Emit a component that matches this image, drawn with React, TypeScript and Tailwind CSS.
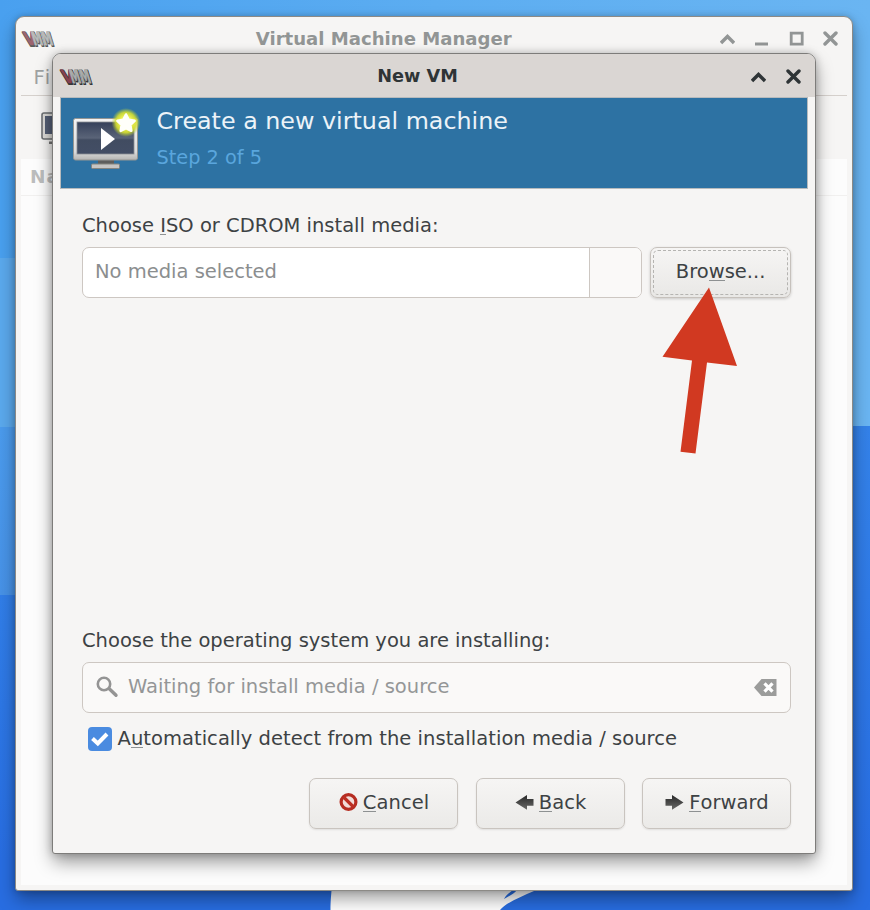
import type { ReactNode } from "react";

function VmmLogo({ faded }: { faded?: boolean }) {
  return (
    <svg width="38" height="24" viewBox="-1 0 38 24" className={faded ? "shrink-0 overflow-visible opacity-80" : "shrink-0 overflow-visible"}>
      <g transform="skewX(17)" fontFamily="DejaVu Sans" fontWeight="bold" fontSize="18.5" strokeLinejoin="round">
        <g fill="#343737" stroke="#343737" strokeWidth="2.2">
          <text x="-1" y="18.800" textLength="11.500" lengthAdjust="spacingAndGlyphs">V</text>
          <text x="7" y="18.800" textLength="20" lengthAdjust="spacingAndGlyphs">MM</text>
        </g>
        <text x="-1.500" y="17.900" textLength="11.500" lengthAdjust="spacingAndGlyphs" fill="#87414f" stroke="#87414f" strokeWidth="0.300">V</text>
        <text x="6.500" y="17.900" textLength="20" lengthAdjust="spacingAndGlyphs" fill="#a9acac" stroke="#a9acac" strokeWidth="0.800">MM</text>
      </g>
    </svg>
  );
}

function MonitorIcon() {
  return (
    <svg width="70" height="64" viewBox="0 0 70 64" className="shrink-0">
      <defs>
        <linearGradient id="frame" x1="0" y1="0" x2="0" y2="1">
          <stop offset="0" stopColor="#f4f4f4" />
          <stop offset="0.8" stopColor="#dcdcdb" />
          <stop offset="1" stopColor="#b5b5b3" />
        </linearGradient>
        <linearGradient id="screen" x1="0" y1="0" x2="0" y2="1">
          <stop offset="0" stopColor="#35405a" />
          <stop offset="0.5" stopColor="#5a6478" />
          <stop offset="0.56" stopColor="#414c61" />
          <stop offset="1" stopColor="#434e65" />
        </linearGradient>
        <radialGradient id="glow">
          <stop offset="0" stopColor="#fffde0" />
          <stop offset="0.4" stopColor="#f0f45a" />
          <stop offset="0.7" stopColor="#d6e02f" stopOpacity="0.9" />
          <stop offset="1" stopColor="#b5d03a" stopOpacity="0" />
        </radialGradient>
      </defs>
      <path d="M25 52h16v5H25z" fill="#5e5e5c" />
      <rect x="18.500" y="56" width="28" height="4.500" rx="1" fill="#c6c5c3" stroke="#85857f" />
      <rect x="0.500" y="10.500" width="64" height="41.500" rx="2" fill="url(#frame)" stroke="#969693" />
      <rect x="4" y="14" width="57" height="32" fill="url(#screen)" stroke="#8b8e94" strokeWidth="0.8" />
      <path d="M28 20v22l14-11z" fill="#fff" />
      <circle cx="53" cy="14.500" r="14.500" fill="url(#glow)" />
      <path d="M53 6.500l2.700 5.400 5.900.9-4.300 4.100 1 5.900-5.300-2.800-5.300 2.800 1-5.900-4.300-4.100 5.900-.9z" fill="#fffffa" stroke="#fffffa" strokeWidth="2.600" strokeLinejoin="round" />
    </svg>
  );
}

function CloseMark({ color }: { color: string }) {
  return (
    <svg width="15" height="15" viewBox="0 0 15 15">
      <path d="M2 2l11 11M13 2L2 13" stroke={color} strokeWidth="3.400" strokeLinecap="round" />
    </svg>
  );
}

function ShadeMark({ color }: { color: string }) {
  return (
    <svg width="15" height="15" viewBox="0 0 15 15">
      <path d="M2.200 10.800L7.500 5.500l5.300 5.300" fill="none" stroke={color} strokeWidth="3.400" strokeLinecap="square" />
    </svg>
  );
}

function Mnemonic({ children }: { children: ReactNode }) {
  return <span className="inline-block border-b border-[#8e9192] leading-[17px]">{children}</span>;
}

function CancelIcon() {
  return (
    <svg width="19" height="19" viewBox="0 0 19 19">
      <circle cx="9.500" cy="9" r="7.400" fill="#f2dcd8" stroke="#b62d22" strokeWidth="3.200" />
      <path d="M4.500 4l10 10" stroke="#bd3024" strokeWidth="3.200" />
    </svg>
  );
}

function ArrowIcon({ right }: { right?: boolean }) {
  return (
    <svg width="19" height="18" viewBox="0 0 19 18" className={right ? "-scale-x-100" : ""}>
      <defs>
        <linearGradient id="arrow" x1="0" y1="0" x2="0" y2="1">
          <stop offset="0" stopColor="#282828" />
          <stop offset="1" stopColor="#6a6a68" />
        </linearGradient>
      </defs>
      <path d="M.5 8.500L12 1v4h6.500v6.700H12v4z" fill="url(#arrow)" />
    </svg>
  );
}

function ActionButton({ icon, children }: { icon: ReactNode; children: ReactNode }) {
  return (
    <button className="flex h-[51px] w-[149px] items-center justify-center gap-[5px] rounded-[7px] border border-[#c9c4bf] bg-linear-to-b from-[#f6f5f4] to-[#ebeae8] pb-[2px] pl-px text-[#3d4244] shadow-[0_1px_2px_#00000018]">
      {icon}
      <span className="tracking-[0.050px]">{children}</span>
    </button>
  );
}

function Backdrop() {
  return (
    <div className="flex h-full flex-col bg-[#286de1]">
      <div className="flex h-[860px]">
        <div className="flex w-1/2 flex-col">
          <div className="h-[258px] bg-linear-to-r from-[#49a0ef] to-[#5cadf1]" />
          <div className="h-[169px] bg-[#5ba9ed]" />
          <div className="h-[168px] bg-linear-to-b from-[#4b9bed] to-[#4792e7]" />
          <div className="grow bg-linear-to-b from-[#317ee8] to-[#286de1]" />
        </div>
        <div className="flex w-1/2 flex-col">
          <div className="h-[426px] bg-linear-to-r from-[#5cadf1] to-[#6ab5f2]" />
          <div className="grow bg-linear-to-b from-[#3482e9] to-[#286de1]" />
        </div>
      </div>
      <svg width="870" height="50" viewBox="0 0 870 50">
        <path d="M330.500 50C330.500 42 331 36 332 25H540L534 31C520 37 506 43 500 50Z" fill="#fff" />
        <path d="M504 39c2-4 5-6 9-9h4c-3 4-8 6-13 9z" fill="#286de1" />
      </svg>
    </div>
  );
}

function ManagerWindow() {
  return (
    <section className="absolute left-[15px] top-4 flex h-[875px] w-[838px] flex-col rounded-t-[9px] rounded-b-[3px] border border-[#8c8a86] bg-[#f6f5f4] px-[5px] pb-[5px] shadow-[0_9px_18px_-1px_#00000060,0_0_6px_#00000030]">
      <header className="flex h-[43px] shrink-0 items-center text-[18.100px] font-bold text-[#929595]">
        <VmmLogo faded />
        <h1 className="grow pr-[11px] text-center">Virtual Machine Manager</h1>
        <div className="flex gap-[19.500px] pr-[9px]">
          <ShadeMark color="#929595" />
          <svg width="15" height="15" viewBox="0 0 15 15"><path d="M1 13h13" stroke="#929595" strokeWidth="3" /></svg>
          <svg width="15" height="15" viewBox="0 0 15 15"><path d="M2.200 2.200h11v11h-11z" fill="none" stroke="#929595" strokeWidth="2.800" /></svg>
          <CloseMark color="#929595" />
        </div>
      </header>
      <nav className="h-[36px] shrink-0 border-b border-[#d5d0cc] pl-[12.500px] pt-[4px] text-[19.500px] leading-[28px] tracking-[1.400px] text-[#a0a3a3]">File</nav>
      <div className="flex h-[63px] shrink-0 pl-[20px] pt-[16px]">
        <svg width="34" height="34" viewBox="0 0 34 34">
          <rect x="1" y="1" width="32" height="26" rx="2" fill="#deddda" stroke="#6d7073" strokeWidth="1.600" />
          <rect x="4" y="4" width="26" height="18" fill="#566077" />
          <path d="M8 29.500h18v2.500H8z" fill="#777" />
        </svg>
      </div>
      <div className="grow bg-[#fcfcfc]">
        <div className="h-[37px] border-b border-[#f1f0ef] pl-[9px] text-[18.500px] font-bold leading-[36px] tracking-[1px] text-[#bcbdbd]">Name</div>
      </div>
    </section>
  );
}

function NewVmDialog() {
  return (
    <section className="absolute left-[52px] top-[53px] flex h-[801px] w-[764px] flex-col rounded-t-[9px] rounded-b-[3px] border border-[#7d7c7a] bg-[#f6f5f4] shadow-[0_9px_18px_-1px_#00000065,0_0_8px_#00000038]">
      <header className="flex h-[43px] shrink-0 items-center rounded-t-[8px] bg-[#dad6d3] pl-[6px] pr-[14.500px] pt-[2px] text-[17.700px] font-bold text-[#2e3436]">
        <VmmLogo />
        <h2 className="grow pr-[13px] text-center">New VM</h2>
        <div className="flex gap-[19.500px]">
          <ShadeMark color="#2e3436" />
          <CloseMark color="#2e3436" />
        </div>
      </header>
      <div className="mx-[7px] flex h-[92px] shrink-0 gap-[13.500px] border border-[#b7bbbd] bg-[#2d72a3] pl-[12px] pt-[10px]">
        <MonitorIcon />
        <div className="flex flex-col">
          <h3 className="-mt-px text-[23.800px] leading-[28px] text-[#ecf3f8]">Create a new virtual machine</h3>
          <p className="mt-[9px] text-[19.300px] leading-[28px] text-[#5aa6dd]">Step 2 of 5</p>
        </div>
      </div>
      <div className="flex grow flex-col pl-[29px] pr-[24px] pb-[24px] pt-[20px] text-[19.500px] text-[#3d4244]">
        <label className="pt-px leading-[31px]">Choose <Mnemonic>I</Mnemonic>SO or CDROM install media:</label>
        <div className="mt-[6px] flex h-[51px] gap-[8px]">
          <div className="flex w-[561px] overflow-hidden rounded-[7px] border border-[#cdc7c2] bg-white">
            <div className="grow pl-[12px] leading-[48px] text-[#8b8e8f]">No media selected</div>
            <div className="w-[52px] border-l border-[#cdc7c2] bg-[#faf9f8]" />
          </div>
          <button className="w-[141px] rounded-[7px] border border-[#c6c1bc] bg-linear-to-b from-[#f6f5f4] to-[#e9e8e6] p-[2px] shadow-[0_1px_3px_#00000030]">
            <span className="flex h-full items-center justify-center rounded-[5px] border border-dashed border-[#b5b4b1] pb-[2px]">
              <span>Bro<Mnemonic>w</Mnemonic>se...</span>
            </span>
          </button>
        </div>
        <div className="grow" />
        <label className="pt-px leading-[31px]">Choose the operating system you are installing:</label>
        <div className="mt-[6px] flex h-[51px] items-center rounded-[7px] border border-[#cdc7c2] bg-[#faf9f8] pl-[13px] pr-[13px] text-[#949697]">
          <svg width="23" height="23" viewBox="0 0 23 23">
            <circle cx="8" cy="8" r="6.200" fill="none" stroke="#949494" strokeWidth="2.600" />
            <path d="M13.500 13l6.500 6.300" stroke="#949494" strokeWidth="3.400" strokeLinecap="round" />
          </svg>
          <span className="grow pb-[1px] pl-[9px]">Waiting for install media / source</span>
          <svg width="23" height="17" viewBox="0 0 23 17">
            <path d="M0 8.500L7.500 0H22.500v17h-15z" fill="#9b9c9b" />
            <path d="M10.500 4.300l8 8.400M18.500 4.300l-8 8.400" stroke="#fff" strokeWidth="3.200" />
          </svg>
        </div>
        <label className="mt-[9px] flex h-[34px] items-center pl-[6px]">
          <span className="flex h-[24px] w-[24px] items-center justify-center rounded-[4px] bg-[#4a8be0]">
            <svg width="20" height="16" viewBox="0 0 20 16">
              <path d="M2.500 7.500l5.300 5L17 3" fill="none" stroke="#fff" strokeWidth="4" />
            </svg>
          </span>
          <span className="pb-px pl-[5.500px] tracking-[0.040px]">A<Mnemonic>u</Mnemonic>tomatically detect from the installation media / source</span>
        </label>
        <div className="mt-[22px] flex justify-end gap-[17.500px]">
          <ActionButton icon={<CancelIcon />}><Mnemonic>C</Mnemonic>ancel</ActionButton>
          <ActionButton icon={<ArrowIcon />}><Mnemonic>B</Mnemonic>ack</ActionButton>
          <ActionButton icon={<ArrowIcon right />}><Mnemonic>F</Mnemonic>orward</ActionButton>
        </div>
      </div>
    </section>
  );
}

export default function App() {
  return (
    <main className="relative h-[910px] w-[870px] overflow-hidden font-['DejaVu_Sans',sans-serif] whitespace-nowrap">
      <Backdrop />
      <ManagerWindow />
      <NewVmDialog />
      <svg className="absolute left-[660px] top-[285px]" width="80" height="172" viewBox="0 0 80 172">
        <path d="M49 2.500L77 81l-30-3.500-11.500 91-15-1.800L32 75.500 2.500 71.800z" fill="#d13921" />
      </svg>
    </main>
  );
}
